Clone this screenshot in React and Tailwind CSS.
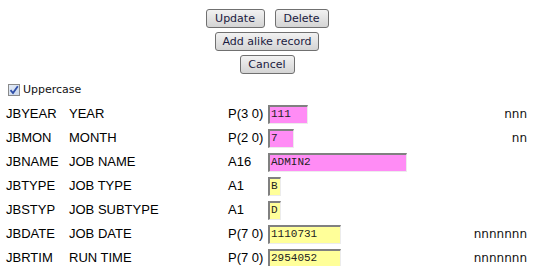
import React from 'react';

const rows = [
  { field: 'JBYEAR', text: 'YEAR', type: 'P(3 0)', value: '111', width: 'w-[40px]', color: 'bg-[#ff8cf5]', edit: 'nnn' },
  { field: 'JBMON', text: 'MONTH', type: 'P(2 0)', value: '7', width: 'w-[26px]', color: 'bg-[#ff8cf5]', edit: 'nn' },
  { field: 'JBNAME', text: 'JOB NAME', type: 'A16', value: 'ADMIN2', width: 'w-[139px]', color: 'bg-[#ff8cf5]', edit: '' },
  { field: 'JBTYPE', text: 'JOB TYPE', type: 'A1', value: 'B', width: 'w-[13px]', color: 'bg-[#ffff99]', edit: '' },
  { field: 'JBSTYP', text: 'JOB SUBTYPE', type: 'A1', value: 'D', width: 'w-[13px]', color: 'bg-[#ffff99]', edit: '' },
  { field: 'JBDATE', text: 'JOB DATE', type: 'P(7 0)', value: '1110731', width: 'w-[73px]', color: 'bg-[#ffff99]', edit: 'nnnnnnn' },
  { field: 'JBRTIM', text: 'RUN TIME', type: 'P(7 0)', value: '2954052', width: 'w-[73px]', color: 'bg-[#ffff99]', edit: 'nnnnnnn' },
];

// grey gradient push button, as the old browser drew it
const Button = ({ label, width }) => (
  <button
    className={`${width} h-[19px] rounded-[3px] border border-[#707070] bg-gradient-to-b from-[#f2f2f2] to-[#d4d4d4] text-[11px] leading-none text-[#1a1a40] font-['DejaVu_Sans',sans-serif]`}
  >
    {label}
  </button>
);

const App = () => {
  return (
    <div className="w-[533px] h-[266px] bg-white overflow-hidden font-['Liberation_Sans',Arial,sans-serif] text-[13px] text-black">
      <div className="flex flex-col items-center gap-[4px] pt-[9px] pl-[1px]">
        <div className="flex gap-[10px]">
          <Button label="Update" width="w-[59px]" />
          <Button label="Delete" width="w-[54px]" />
        </div>
        <Button label="Add alike record" width="w-[104px]" />
        <Button label="Cancel" width="w-[55px]" />
      </div>

      <div className="flex items-center gap-[3px] pl-[8px] mt-[10px] h-[12px]">
        <span className="w-[12px] h-[12px] border border-[#8a8a8a] bg-gradient-to-br from-[#e4ecf7] to-[#c9d6ea] flex items-center justify-center">
          <svg width="10" height="10" viewBox="0 0 10 10">
            <path d="M1.5 5.2 L4 8 L8.8 1.2" fill="none" stroke="#2f4fa8" strokeWidth="1.8" />
          </svg>
        </span>
        <span className="text-[11px] font-['DejaVu_Sans',sans-serif] text-[#111]">Uppercase</span>
      </div>

      <div className="flex flex-col mt-[6px]">
        {rows.map((r) => (
          <div key={r.field} className="flex items-center h-[24px] pl-[6px] pr-[6px]">
            <span className="w-[63px]">{r.field}</span>
            <span className="w-[159px]">{r.text}</span>
            <span className="w-[40px]">{r.type}</span>
            <span
              className={`${r.width} h-[19px] ${r.color} border-t-2 border-l-2 border-b border-r border-t-[#808080] border-l-[#808080] border-b-[#ececec] border-r-[#ececec] pl-[1px] flex items-center text-[11px] font-['Liberation_Mono',monospace] text-[#222]`}
            >
              {r.value}
            </span>
            <span className="flex-1 text-right text-[12px] text-[#111] font-['DejaVu_Sans',sans-serif]">{r.edit}</span>
          </div>
        ))}
      </div>
    </div>
  );
};

export default App;
